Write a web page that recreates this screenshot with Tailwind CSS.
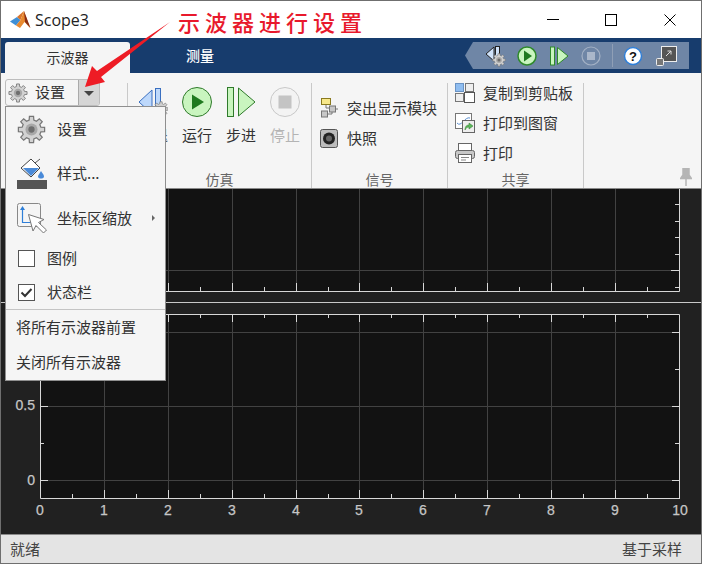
<!DOCTYPE html>
<html lang="zh">
<head>
<meta charset="utf-8">
<title>Scope3</title>
<script src="https://cdn.jsdelivr.net/npm/@tailwindcss/browser@4"></script>
</head>
<body class="bg-white">
<svg width="0" height="0" class="absolute"><defs>
<symbol id="gear" viewBox="0 0 24 24"><path d="M19.76 10.06L22.86 10.28L22.86 13.72L19.76 13.94L18.86 16.12L20.9 18.47L18.47 20.9L16.12 18.86L13.94 19.76L13.72 22.86L10.28 22.86L10.06 19.76L7.88 18.86L5.53 20.9L3.1 18.47L5.14 16.12L4.24 13.94L1.14 13.72L1.14 10.28L4.24 10.06L5.14 7.88L3.1 5.53L5.53 3.1L7.88 5.14L10.06 4.24L10.28 1.14L13.72 1.14L13.94 4.24L16.12 5.14L18.47 3.1L20.9 5.53L18.86 7.88Z" fill="#d2d2d2" stroke="#757575" stroke-width="1"/><circle cx="12" cy="12" r="5" fill="#a8a8a8"/><circle cx="12" cy="12" r="2.6" fill="#6e6e6e"/></symbol>
</defs></svg>
<div class="relative w-[702px] h-[564px] overflow-hidden border border-[#6f6f6f] flex flex-col [font-family:'Noto_Sans_CJK_SC',sans-serif] text-[15px] text-[#333]">

  <!-- title bar -->
  <div class="h-[37px] bg-white flex items-center shrink-0">
    <svg class="ml-[9px]" width="21" height="18" viewBox="0 0 21 18"><path d="M0 10.500L7 6L10.500 9L6 14.500Z" fill="#3f8fd6"/><path d="M7 6L14 0L10.500 9Z" fill="#d9742a"/><path d="M14 0L10.500 9L6 14.500L10 17L14.500 11L20 17Z" fill="#e8892f"/><path d="M14 0L20.500 17L15 11Z" fill="#8a2c12"/></svg>
    <span class="ml-[4px] text-[16px] text-[#222] [font-family:'Open_Sans',sans-serif]">Scope3</span>
    <div class="ml-auto flex items-center mr-[1px]">
      <div class="w-[58px] flex justify-center"><div class="w-[12px] h-px bg-black"></div></div>
      <div class="w-[58px] flex justify-center"><div class="w-[12px] h-[12px] border border-black"></div></div>
      <div class="w-[60px] flex justify-center"><svg width="12" height="12" viewBox="0 0 12 12"><path d="M.5.5L11.5 11.5M11.5.5L.5 11.5" stroke="#000" fill="none"/></svg></div>
    </div>
  </div>

  <!-- tab band -->
  <div class="h-[35px] bg-[#173c6d] flex shrink-0 pl-[4px] text-[14px]">
    <div class="w-[125px] mt-[4px] h-[31px] bg-[#f5f5f5] rounded-t-[3px] flex items-center justify-center text-[#333]">示波器</div>
    <div class="w-[140px] flex items-center justify-center text-white font-medium">测量</div>
    <div class="ml-auto mr-[12px] mt-[4px] h-[27px] w-[224px] bg-[#6f86a6] [clip-path:polygon(8px_0,100%_0,100%_100%,8px_100%,0_50%)] flex items-center pl-[14px]">
      <div class="w-[32px] flex justify-center">
        <svg width="21" height="22" viewBox="0 0 21 22"><path d="M1 9L9 2V16Z" fill="#cfe2fa" stroke="#222"/><rect x="10.500" y="1.500" width="4" height="14" fill="#cfe2fa" stroke="#222"/><use href="#gear" x="7" y="8" width="14" height="14"/></svg>
      </div>
      <div class="w-[32px] flex justify-center">
        <svg width="20" height="20" viewBox="0 0 20 20"><circle cx="10" cy="10" r="9" fill="#c9f5bf" stroke="#2f8a2b" stroke-width="1.500"/><path d="M7 4.500L15 10L7 15.500Z" fill="#1f7a1f"/></svg>
      </div>
      <div class="w-[32px] flex justify-center">
        <svg width="20" height="20" viewBox="0 0 20 20"><rect x="1.500" y="1" width="4" height="18" fill="#c9f5bf" stroke="#2f8a2b"/><path d="M8.500 1.500L19 10L8.500 18.500Z" fill="#c9f5bf" stroke="#2f8a2b"/></svg>
      </div>
      <div class="w-[32px] flex justify-center">
        <svg width="20" height="20" viewBox="0 0 20 20"><circle cx="10" cy="10" r="9" fill="none" stroke="#a3b1c5" stroke-width="1.200"/><rect x="6" y="6" width="8" height="8" fill="#aab7ca"/></svg>
      </div>
      <div class="ml-[5px] w-px h-[23px] bg-[#8f9fb6]"></div>
      <div class="ml-[4px] w-[32px] flex justify-center">
        <svg width="20" height="20" viewBox="0 0 20 20"><circle cx="10" cy="10" r="8.500" fill="#fff" stroke="#2f7fd8" stroke-width="1.500"/><text x="10" y="14.500" text-anchor="middle" font-size="13" font-weight="700" font-family="Liberation Sans" fill="#111">?</text></svg>
      </div>
      <div class="ml-[1px] w-[32px] flex justify-center">
        <svg width="21" height="20" viewBox="0 0 21 20"><rect x="5.500" y=".5" width="15" height="15" fill="#555" stroke="#eee"/><path d="M10 10L15 5M11.500 5H15V8.500" stroke="#ddd" fill="none"/><rect x=".5" y="12.500" width="7" height="7" rx="1" fill="#777" stroke="#eee"/></svg>
      </div>
    </div>
  </div>

  <!-- toolstrip -->
  <div class="h-[115px] bg-[#f5f5f5] flex shrink-0">
    <div class="w-[126px] pl-[4px] pt-[6px]">
      <div class="w-[95px] h-[27px] border border-[#bdbdbd] rounded-[3px] flex items-center overflow-hidden">
        <svg class="ml-[2px]" width="20" height="20"><use href="#gear" width="20" height="20"/></svg>
        <span class="ml-[7px]">设置</span>
        <div class="ml-auto w-[21px] h-full bg-[#d6d6d6] border-l border-[#aaa] flex items-center justify-center pt-[1px]"><div class="w-0 h-0 border-x-[5px] border-x-transparent border-t-[5px] border-t-[#444]"></div></div>
      </div>
    </div>

    <div class="w-[185px] mt-[10px] border-l border-r border-[#c9c9c9] flex flex-col">
      <div class="flex pl-[3px] pt-[4px]">
        <div class="w-[44px] flex flex-col items-center gap-[8px]">
          <svg width="30" height="30" viewBox="0 0 30 30"><path d="M1 15L14 3V27Z" fill="#bdd8fb" stroke="#3a6fc0"/><rect x="17.500" y="1.500" width="5" height="27" fill="#bdd8fb" stroke="#3a6fc0"/><use href="#gear" x="15" y="14" width="16" height="16"/></svg>
          <span class="leading-[20px]">步退</span>
        </div>
        <div class="w-[44px] flex flex-col items-center gap-[8px]">
          <svg width="30" height="30" viewBox="0 0 30 30"><circle cx="15" cy="15" r="14.500" fill="#c9f5bf" stroke="#2f7a2b"/><path d="M10 7.500L22 15L10 22.500Z" fill="#1f7a1f"/></svg>
          <span class="leading-[20px]">运行</span>
        </div>
        <div class="w-[44px] flex flex-col items-center gap-[8px]">
          <svg width="30" height="30" viewBox="0 0 30 30"><rect x="1.500" y=".5" width="6" height="29" fill="#c9f5bf" stroke="#2f7a2b"/><path d="M12.500 1L29 15L12.500 29Z" fill="#c9f5bf" stroke="#2f7a2b"/></svg>
          <span class="leading-[20px]">步进</span>
        </div>
        <div class="w-[44px] flex flex-col items-center gap-[8px]">
          <svg width="30" height="30" viewBox="0 0 30 30"><circle cx="15" cy="15" r="14.500" fill="#f3f3f3" stroke="#c8c8c8"/><rect x="8.500" y="8.500" width="13" height="13" fill="#c4c4c4"/></svg>
          <span class="leading-[20px] text-[#b4b4b4]">停止</span>
        </div>
      </div>
      <div class="mt-auto mb-[1px] h-[16px] leading-[16px] text-center text-[14px] text-[#666]">仿真</div>
    </div>

    <div class="w-[136px] mt-[10px] border-r border-[#c9c9c9] flex flex-col">
      <div class="pt-[10px] pl-[8px]">
        <div class="h-[30px] flex items-center gap-[9px]">
          <svg width="18" height="20" viewBox="0 0 18 20"><rect x="1.500" y=".5" width="9" height="6" fill="#f8e88a" stroke="#8a7a20"/><rect x="1.500" y="13" width="6" height="6" fill="#c8c8c8" stroke="#777"/><rect x="9.500" y="8" width="6" height="6" fill="#c8c8c8" stroke="#777"/><path d="M6 7V10H9M15.500 11H18M8 16H12V14" stroke="#777" fill="none"/></svg>
          <span>突出显示模块</span>
        </div>
        <div class="h-[30px] flex items-center gap-[9px]">
          <svg width="18" height="19" viewBox="0 0 18 19"><rect x=".5" y=".5" width="17" height="18" rx="2" fill="#bdbdbd" stroke="#555"/><circle cx="9" cy="9.500" r="6" fill="#222"/><circle cx="9" cy="9.500" r="3" fill="#666"/></svg>
          <span>快照</span>
        </div>
      </div>
      <div class="mt-auto mb-[1px] h-[16px] leading-[16px] text-center text-[14px] text-[#666]">信号</div>
    </div>

    <div class="w-[136px] mt-[10px] border-r border-[#c9c9c9] flex flex-col">
      <div class="pl-[7px] flex flex-col gap-[10px]">
        <div class="h-[20px] flex items-center gap-[8px]">
          <svg width="20" height="20" viewBox="0 0 20 20"><rect x=".5" y=".5" width="8" height="8" fill="#8fbdf0" stroke="#6a93c4"/><rect x="10.500" y=".5" width="8" height="8" fill="#eee" stroke="#777"/><rect x=".5" y="10.500" width="8" height="8" fill="#eee" stroke="#777"/><rect x="9.500" y="9.500" width="10" height="10" fill="#fff" stroke="#555"/></svg>
          <span>复制到剪贴板</span>
        </div>
        <div class="h-[20px] flex items-center gap-[8px]">
          <svg width="20" height="20" viewBox="0 0 20 20"><rect x=".5" y=".5" width="16" height="15" fill="#fff" stroke="#777"/><path d="M2 10C6 15 10 3 15 5" stroke="#5b8fd0" fill="none"/><rect x="7.500" y="7.500" width="12" height="12" fill="#eee" stroke="#666"/><path d="M10 17C10 13 12 12 14 12V10L18 13L14 16V14C12 14 11 15 10 17Z" fill="#5cb85c" stroke="#2f7a2b" stroke-width=".5"/></svg>
          <span>打印到图窗</span>
        </div>
        <div class="h-[20px] flex items-center gap-[8px]">
          <svg width="20" height="20" viewBox="0 0 20 20"><rect x="3.500" y=".5" width="13" height="7" fill="#fff" stroke="#666"/><rect x=".5" y="7.500" width="19" height="8" rx="2" fill="#c8c8c8" stroke="#666"/><rect x="3.500" y="11.500" width="13" height="8" fill="#fff" stroke="#666"/><path d="M6 14.500H14M6 17H11" stroke="#888"/></svg>
          <span>打印</span>
        </div>
      </div>
      <div class="mt-auto mb-[1px] h-[16px] leading-[16px] text-center text-[14px] text-[#666]">共享</div>
    </div>

    <div class="flex-1 flex justify-end items-end pr-[9px] pb-[2px]">
      <svg width="12" height="18" viewBox="0 0 12 18"><path d="M3 0H9V7L11.500 10.500H.5L3 7ZM6 10.500V18" fill="#b5b5b5" stroke="#b5b5b5" stroke-width="1.500"/></svg>
    </div>
  </div>

  <!-- plots -->
  <div class="h-[346px] bg-[#212121] shrink-0 border-t border-[#8a8a8a]">
    <svg class="block" width="700" height="345" viewBox="1 189 700 345" font-family="Liberation Sans" font-size="14">
      <rect x="40" y="189" width="640" height="102" fill="#121212"/>
      <rect x="40" y="314" width="640" height="184" fill="#121212"/>
      <g stroke="#424242">
        <path d="M104.500 189V291M168.500 189V291M232.500 189V291M296.500 189V291M359.500 189V291M423.500 189V291M487.500 189V291M551.500 189V291M615.500 189V291M40 270.500H680"/>
        <path d="M104.500 314V498M168.500 314V498M232.500 314V498M296.500 314V498M359.500 314V498M423.500 314V498M487.500 314V498M551.500 314V498M615.500 314V498M40 332.500H680M40 406.500H680M40 480.500H680"/>
      </g>
      <g stroke="#d8d8d8" fill="none">
        <path d="M40 291.500H679.500V189M40.500 314.500H679.500V498M40.500 314V498.500H680"/>
        <path d="M104.500 498V490M168.500 498V490M232.500 498V490M296.500 498V490M359.500 498V490M423.500 498V490M487.500 498V490M551.500 498V490M615.500 498V490"/>
        <path d="M72.500 498V494M136.500 498V494M200.500 498V494M264.500 498V494M328.500 498V494M391.500 498V494M455.500 498V494M519.500 498V494M583.500 498V494M647.500 498V494"/>
        <path d="M104.500 314V322M168.500 314V322M232.500 314V322M296.500 314V322M359.500 314V322M423.500 314V322M487.500 314V322M551.500 314V322M615.500 314V322"/>
        <path d="M72.500 314V318M136.500 314V318M200.500 314V318M264.500 314V318M328.500 314V318M391.500 314V318M455.500 314V318M519.500 314V318M583.500 314V318M647.500 314V318"/>
        <path d="M168.500 291V283M232.500 291V283M296.500 291V283M359.500 291V283M423.500 291V283M487.500 291V283M551.500 291V283M615.500 291V283"/>
        <path d="M200.500 291V287M264.500 291V287M328.500 291V287M391.500 291V287M455.500 291V287M519.500 291V287M583.500 291V287M647.500 291V287"/>
        <path d="M40 406.500H48M40 480.500H48M40 443.500H44M40 332.500H48M40 369.500H44"/>
        <path d="M672 406.500H679M672 480.500H679M675 443.500H679M672 332.500H679M675 369.500H679"/>
        <path d="M671 270.500H679M675 204.500H679M675 221.500H679M675 237.500H679M675 254.500H679M675 287.500H679"/>
      </g>
      <path d="M1 302.500H701" stroke="#c9c9c9"/>
      <g fill="#c6c6c6" stroke="#c6c6c6" stroke-width=".25">
        <text x="35" y="410" text-anchor="end">0.5</text>
        <text x="35" y="485" text-anchor="end">0</text>
        <g text-anchor="middle">
          <text x="40" y="515">0</text><text x="104" y="515">1</text><text x="168" y="515">2</text><text x="232" y="515">3</text><text x="296" y="515">4</text><text x="359" y="515">5</text><text x="423" y="515">6</text><text x="487" y="515">7</text><text x="551" y="515">8</text><text x="615" y="515">9</text><text x="680" y="515">10</text>
        </g>
      </g>
    </svg>
  </div>

  <!-- status bar -->
  <div class="flex-1 bg-[#e4e4e4] border-t border-[#8a8a8a] flex items-center justify-between pl-[9px] pr-[19px] text-[15px] text-[#444]">
    <span>就绪</span><span>基于采样</span>
  </div>

  <!-- settings menu -->
  <div class="absolute left-[4px] top-[105px] w-[161px] h-[275px] bg-[#f5f5f5] border border-[#8f8f8f] flex flex-col">
    <div class="h-[44px] flex items-center pl-[11px] gap-[11px]"><svg width="29" height="29"><use href="#gear" width="29" height="29"/></svg><span>设置</span></div>
    <div class="h-[45px] flex items-center pl-[11px] gap-[10px]">
      <svg width="30" height="31" viewBox="0 0 30 31"><path d="M4 10L14 1L23 10L14 19Z" fill="#fff" stroke="#444"/><path d="M6 10H22L14 18Z" fill="#4a8ad8"/><path d="M18 5L23 1" stroke="#555"/><path d="M24 13C26 16 27 17 27 18.500C27 20 25.500 20.500 24 20.500C22.500 20.500 21 20 21 18.500C21 17 23 15 24 13Z" fill="#4a8ad8"/><rect y="22" width="30" height="9" fill="#555"/></svg>
      <span>样式...</span>
    </div>
    <div class="h-[44px] flex items-center pl-[11px] gap-[10px]">
      <svg width="30" height="31" viewBox="0 0 30 31"><rect x=".5" y=".5" width="23" height="23" rx="2" fill="#f5f5f5" stroke="#888"/><path d="M5.500 5V19.500H19" stroke="#2f7fd8" fill="none" stroke-width="1.200"/><path d="M3 7L5.500 3L8 7Z" fill="#2f7fd8"/><path d="M11.500 11.500L27 16.500L21.500 19.500L29.500 27L26.500 30L19 22.500L16 28Z" fill="#fff" stroke="#777"/></svg>
      <span>坐标区缩放</span>
      <div class="ml-auto mr-[10px] w-0 h-0 border-y-[3px] border-y-transparent border-l-[3px] border-l-[#666]"></div>
    </div>
    <div class="h-[36px] flex items-center pl-[12px] gap-[12px]"><div class="w-[17px] h-[17px] bg-white border border-[#555]"></div><span class="text-[#333]">图例</span></div>
    <div class="h-[33px] flex items-center pl-[12px] gap-[12px]">
      <svg width="17" height="17" viewBox="0 0 17 17"><rect x=".5" y=".5" width="16" height="16" fill="#fff" stroke="#555"/><path d="M3.500 8.500L7 12L13.500 5" fill="none" stroke="#333" stroke-width="2"/></svg>
      <span>状态栏</span>
    </div>
    <div class="h-px bg-[#c4c4c4]"></div>
    <div class="h-[35px] flex items-center pl-[10px]">将所有示波器前置</div>
    <div class="h-[34px] flex items-center pl-[10px]">关闭所有示波器</div>
  </div>

  <!-- annotation -->
  <svg class="absolute left-0 top-0 pointer-events-none" width="180" height="100" viewBox="1 1 180 100"><path d="M170 22L101 77L105 82L85 87L92 66L97 71Z" fill="#ee1c25"/></svg>
  <div class="absolute left-[177px] top-[4px] text-[22px] leading-[32px] tracking-[5px] text-[#e8192c] font-medium whitespace-nowrap">示波器进行设置</div>
</div>
</body>
</html>
